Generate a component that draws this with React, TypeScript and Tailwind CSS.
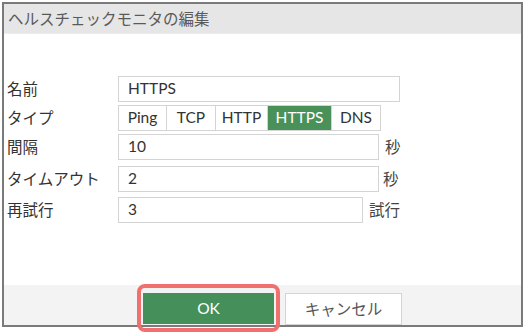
import React from "react";

const jp = "font-['Noto_Sans_CJK_JP',sans-serif]";
const lat = "font-['Lato','Noto_Sans_CJK_JP',sans-serif]";

const types = [
  { name: "Ping", w: "w-[47px]" },
  { name: "TCP", w: "w-[49px]" },
  { name: "HTTP", w: "w-[52px]" },
  { name: "HTTPS", w: "w-[64px]" },
  { name: "DNS", w: "w-[49px]" },
];

function Field({ value, width }: { value: string; width: string }) {
  return (
    <div
      className={`${width} h-full border border-[#d4d4d4] bg-white flex items-center pl-[9px] text-[15.5px] text-[#333] ${lat}`}
    >
      {value}
    </div>
  );
}

function Label({ children }: { children: React.ReactNode }) {
  return (
    <div className={`w-[111px] shrink-0 text-[15.5px] text-[#333] ${jp}`}>
      {children}
    </div>
  );
}

export default function App() {
  const active = "HTTPS";

  return (
    <div className="w-[524px] h-[332px] bg-white pt-[2px] pl-[2px] overflow-hidden">
      <div className="w-[521px] h-[325px] border-2 border-[#7a7a7a] flex flex-col">
        {/* Title */}
        <div
          className={`h-[30px] bg-[#e6e6e6] border-b border-[#ededed] flex items-center pl-[4px] text-[15.5px] text-[#5a5a5a] ${jp}`}
        >
          ヘルスチェックモニタの編集
        </div>

        {/* Body */}
        <div className="flex-1 flex flex-col pt-[42px] pl-[3px]">
          <div className="flex items-center h-[26px]">
            <Label>名前</Label>
            <Field value="HTTPS" width="w-[282px]" />
          </div>

          <div className="flex items-center h-[26px] mt-[3px]">
            <Label>タイプ</Label>
            <div className={`flex h-full border border-[#d4d4d4] text-[15.5px] ${lat}`}>
              {types.map((t, i) => (
                <div
                  key={t.name}
                  className={`${t.w} flex items-center justify-center ${
                    i > 0 ? "border-l border-[#d4d4d4]" : ""
                  } ${
                    t.name === active
                      ? "bg-[#4a9159] text-white"
                      : "bg-white text-[#333]"
                  }`}
                >
                  {t.name}
                </div>
              ))}
            </div>
          </div>

          <div className="flex items-center h-[26px] mt-[3px]">
            <Label>間隔</Label>
            <Field value="10" width="w-[261px]" />
            <span className={`ml-[6px] text-[15.5px] text-[#444] ${jp}`}>秒</span>
          </div>

          <div className="flex items-center h-[26px] mt-[6px]">
            <Label>タイムアウト</Label>
            <Field value="2" width="w-[261px]" />
            <span className={`ml-[4px] text-[15.5px] text-[#444] ${jp}`}>秒</span>
          </div>

          <div className="flex items-center h-[26px] mt-[5px]">
            <Label>再試行</Label>
            <Field value="3" width="w-[245px]" />
            <span className={`ml-[6px] text-[15.5px] text-[#444] ${jp}`}>試行</span>
          </div>
        </div>

        {/* Footer */}
        <div className="h-[40px] bg-[#f3f3f3] flex items-end pl-[139px]">
          <div className="relative">
            <button
              className={`w-[131px] h-[31px] mb-[1px] bg-[#45905a] text-white text-[15.5px] ${lat}`}
            >
              OK
            </button>
            <span className="pointer-events-none absolute -left-[6px] -right-[6px] -top-[9px] -bottom-[7px] border-[4px] border-[#f07070] rounded-[8px]" />
          </div>
          <button
            className={`ml-[11px] w-[117px] h-[32px] bg-white border border-[#d4d4d4] text-[15.5px] text-[#555] ${jp}`}
          >
            キャンセル
          </button>
        </div>
      </div>
    </div>
  );
}
